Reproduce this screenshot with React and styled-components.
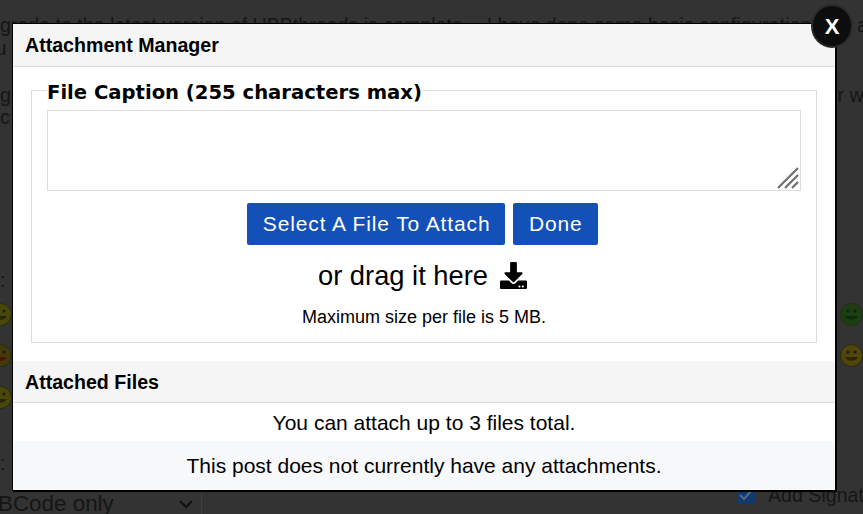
import React from 'react';
import styled, { createGlobalStyle } from 'styled-components';
import { FaDownload } from 'react-icons/fa';

const GlobalStyle = createGlobalStyle`
  html, body {
    margin: 0;
    padding: 0;
    background: #333;
  }
`;

const Face = ({ tone, mouth }) => (
  <SmileySvg width="23" height="23" viewBox="0 0 23 23">
    <circle cx="11.5" cy="11.5" r="11" fill={tone} stroke="#2a2a12" />
    <circle cx="8" cy="8" r="1.6" fill="#1c1c1c" />
    <circle cx="15" cy="8" r="1.6" fill="#1c1c1c" />
    <path d="M5 13c2 5 11 5 13 0z" fill={mouth} />
  </SmileySvg>
);

const App = () => {
  return (
    <Page>
      <GlobalStyle />
      <Behind>
        <BehindLine $top={13}>
          <span>ograde to the latest version of UBBthreads is complete -- I have done some basic configuration</span>
          <span>a</span>
        </BehindLine>
        <BehindLine $top={-1}>
          <span>ru</span>
        </BehindLine>
        <BehindLine $top={23}>
          <span>ng</span>
          <span>r wi</span>
        </BehindLine>
        <BehindLine $top={-2}>
          <span>ac</span>
        </BehindLine>
        <BehindLine $top={139}>
          <span>e:</span>
        </BehindLine>
        <SmileyRow $top={11}>
          <Face tone="#4a4808" mouth="#26260a" />
          <Face tone="#1a4012" mouth="#102a0e" />
        </SmileyRow>
        <SmileyRow $top={18}>
          <Face tone="#423a08" mouth="#5a0c0c" />
          <Face tone="#50460a" mouth="#2a2608" />
        </SmileyRow>
        <SmileyRow $top={19}>
          <Face tone="#4a4808" mouth="#26260a" />
          <span />
        </SmileyRow>
        <BehindLine $top={42}>
          <span>e:</span>
        </BehindLine>
        <BottomRow>
          <SelectStub>
            <SelectText>BCode only</SelectText>
            <svg width="14" height="9" viewBox="0 0 14 9" fill="none" stroke="#111" strokeWidth="2">
              <path d="M1 1l6 6 6-6" />
            </svg>
          </SelectStub>
          <SignatureBox>
            <FakeCheck>
              <svg width="14" height="12" viewBox="0 0 14 12" fill="none" stroke="#4f6a8a" strokeWidth="2">
                <path d="M1 6l4 4 8-9" />
              </svg>
            </FakeCheck>
            <span>Add Signature</span>
          </SignatureBox>
        </BottomRow>
      </Behind>

      <Modal>
        <CloseButton>X</CloseButton>
        <TitleBar>Attachment Manager</TitleBar>
        <UploadArea>
          <CaptionFieldset>
            <CaptionLegend>File Caption (255 characters max)</CaptionLegend>
            <CaptionWrap>
              <CaptionInput />
              <Grip width="22" height="22" viewBox="0 0 22 22" stroke="#6f6f6f" strokeWidth="2.2">
                <path d="M1 21L21 1M8 21L21 8M15 21l6-6" />
              </Grip>
            </CaptionWrap>
            <ButtonRow>
              <BlueButton>Select A File To Attach</BlueButton>
              <BlueButton>Done</BlueButton>
            </ButtonRow>
            <DragLine>
              or drag it here
              <FaDownload size={27} />
            </DragLine>
            <SizeNote>Maximum size per file is 5 MB.</SizeNote>
          </CaptionFieldset>
        </UploadArea>
        <SectionBar>Attached Files</SectionBar>
        <InfoRow>You can attach up to 3 files total.</InfoRow>
        <InfoRow $alt>This post does not currently have any attachments.</InfoRow>
      </Modal>
    </Page>
  );
};

const Page = styled.div`
  position: relative;
  width: 863px;
  height: 514px;
  overflow: hidden;
  background: #333;
  color: #161616;
  font-family: 'Liberation Sans', Arial, sans-serif;
  font-size: 19.6px;
`;

const Behind = styled.div`
  display: flex;
  flex-direction: column;
  height: 100%;
  margin-left: -11px;
  width: 879px;
`;

const BehindLine = styled.div`
  display: flex;
  justify-content: space-between;
  white-space: nowrap;
  margin-top: ${(p) => p.$top}px;
  line-height: 24px;
`;

const SmileyRow = styled.div`
  display: flex;
  justify-content: space-between;
  margin-top: ${(p) => p.$top}px;
  padding-right: 5px;
`;

const SmileySvg = styled.svg`
  display: block;
  flex: none;
`;

const BottomRow = styled.div`
  display: flex;
  justify-content: space-between;
  margin-top: auto;
  margin-bottom: -2px;
  height: 24px;
  line-height: 24px;
`;

const SelectStub = styled.div`
  display: flex;
  align-items: center;
  justify-content: space-between;
  width: 213px;
  padding: 0 8px 0 9px;
  box-sizing: border-box;
  border-right: 1px solid #3f3f3f;
`;

const SelectText = styled.span`
  font-size: 22.4px;
`;

const SignatureBox = styled.div`
  display: flex;
  align-items: center;
  align-self: flex-start;
  gap: 13px;
  width: 131px;
  height: 24px;
  margin-top: -9px;
  white-space: nowrap;
  overflow: hidden;
`;

const FakeCheck = styled.div`
  display: flex;
  align-items: center;
  justify-content: center;
  flex: none;
  width: 18px;
  height: 18px;
  border-radius: 2px;
  background: #123a6e;
`;

const Modal = styled.div`
  position: absolute;
  left: 12px;
  top: 23px;
  width: 822px;
  height: 466px;
  background: #fff;
  border: 1px solid #000;
  box-shadow: 1px 1px 0 #000;
  color: #000;
`;

const CloseButton = styled.div`
  position: absolute;
  top: -20px;
  right: -18px;
  width: 38px;
  height: 38px;
  padding-top: 2px;
  display: flex;
  align-items: center;
  justify-content: center;
  border: 2px solid #2a2a2a;
  border-radius: 50%;
  background: #0d0d0d;
  color: #fff;
  font-size: 22px;
  font-weight: 700;
`;

const TitleBar = styled.div`
  height: 42px;
  line-height: 42px;
  padding-left: 12px;
  background: #f5f5f5;
  border-bottom: 1px solid #ddd;
  font-size: 19.6px;
  font-weight: 700;
`;

const UploadArea = styled.div`
  height: 294px;
  padding: 11px 18px 0;
  box-sizing: border-box;
`;

const CaptionFieldset = styled.fieldset`
  margin: 0;
  padding: 0 15px;
  height: 265px;
  box-sizing: border-box;
  border: 1px solid #ddd;
  text-align: center;
`;

const CaptionLegend = styled.legend`
  padding: 0;
  margin: 0 auto 0 0;
  height: 24px;
  font-family: 'DejaVu Sans', Verdana, sans-serif;
  font-size: 19.6px;
  font-weight: 700;
  line-height: 30px;
`;

const CaptionWrap = styled.div`
  position: relative;
  height: 81px;
  margin-top: 8px;
`;

const CaptionInput = styled.textarea`
  display: block;
  width: 100%;
  height: 100%;
  box-sizing: border-box;
  margin: 0;
  padding: 0;
  border: 1px solid #ddd;
  background: #fff;
  resize: none;
  outline: none;
`;

const Grip = styled.svg`
  position: absolute;
  right: 2px;
  bottom: 2px;
`;

const ButtonRow = styled.div`
  display: flex;
  justify-content: center;
  gap: 8px;
  margin-top: 12px;
  padding-right: 3px;
`;

const BlueButton = styled.button`
  height: 42px;
  padding: 0 15px 0 15.5px;
  border: 0;
  border-radius: 2px;
  background: #1350b8;
  color: #fff;
  font-family: 'Liberation Sans', Arial, sans-serif;
  font-size: 21px;
  letter-spacing: 0.88px;
`;

const DragLine = styled.div`
  display: flex;
  align-items: center;
  justify-content: center;
  gap: 12px;
  margin-top: 12px;
  padding-right: 3px;
  height: 37px;
  font-size: 27.3px;
`;

const SizeNote = styled.div`
  margin-top: 13px;
  font-size: 18px;
  line-height: 21px;
`;

const SectionBar = styled.div`
  height: 41px;
  line-height: 43px;
  padding-left: 12px;
  background: #f5f5f5;
  border-bottom: 1px solid #ddd;
  font-size: 19.6px;
  font-weight: 700;
`;

const InfoRow = styled.div`
  height: ${(p) => (p.$alt ? 49 : 38)}px;
  line-height: ${(p) => (p.$alt ? 50 : 40)}px;
  background: ${(p) => (p.$alt ? '#f7f8fa' : '#fff')};
  text-align: center;
  font-size: 21px;
`;

export default App;
